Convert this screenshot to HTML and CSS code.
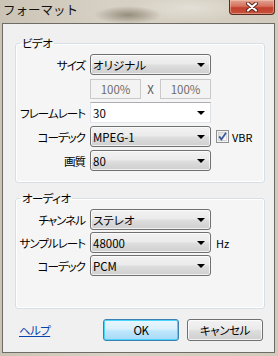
FILE: index.html
```html
<!DOCTYPE html>
<html lang="ja">
<head>
<meta charset="utf-8">
<link rel="stylesheet" href="styles.css">
</head>
<body>
<div class="window">
  <div class="titlebar">
    <span class="title">フォーマット</span>
    <div class="close">
      <svg width="14" height="10" viewBox="0 0 14 10"><path d="M3 1.5 L11 8.5 M11 1.5 L3 8.5" stroke="#5a2219" stroke-width="4" stroke-linecap="round"/><path d="M3 1.5 L11 8.5 M11 1.5 L3 8.5" stroke="#ffffff" stroke-width="2.2" stroke-linecap="round"/></svg>
    </div>
  </div>
  <div class="client">
    <fieldset class="group video">
      <legend>ビデオ</legend>
      <div class="form">
        <span class="lbl">サイズ</span>
        <div class="select"><span class="val">オリジナル</span><i class="arrow"></i></div>
        <span></span>

        <span class="lbl"></span>
        <div class="pair"><div class="field">100%</div><span class="x">X</span><div class="field">100%</div></div>
        <span></span>

        <span class="lbl">フレームレート</span>
        <div class="select edit"><span class="val">30</span><i class="arrow"></i></div>
        <span></span>

        <span class="lbl">コーデック</span>
        <div class="select"><span class="val">MPEG-1</span><i class="arrow"></i></div>
        <label class="check"><svg width="13" height="13" viewBox="0 0 13 13"><defs><linearGradient id="cb" x1="0" y1="0" x2="1" y2="1"><stop offset="0" stop-color="#dcdcdc"/><stop offset="1" stop-color="#ffffff"/></linearGradient></defs><rect x="0.5" y="0.5" width="12" height="12" fill="#f4f4f4" stroke="#8e8f8f"/><rect x="2.5" y="2.5" width="8" height="8" fill="url(#cb)" stroke="#c3c3c3" stroke-width="0.6"/><path d="M3.2 6.4 L5.4 9.4 L10 2.8" fill="none" stroke="#3d5ba0" stroke-width="1.8"/></svg><span>VBR</span></label>

        <span class="lbl">画質</span>
        <div class="select"><span class="val">80</span><i class="arrow"></i></div>
        <span></span>
      </div>
    </fieldset>

    <fieldset class="group audio">
      <legend>オーディオ</legend>
      <div class="form">
        <span class="lbl">チャンネル</span>
        <div class="select"><span class="val">ステレオ</span><i class="arrow"></i></div>
        <span></span>

        <span class="lbl">サンプルレート</span>
        <div class="select"><span class="val">48000</span><i class="arrow"></i></div>
        <span class="unit">Hz</span>

        <span class="lbl">コーデック</span>
        <div class="select"><span class="val">PCM</span><i class="arrow"></i></div>
        <span></span>
      </div>
    </fieldset>

    <div class="buttons">
      <a class="help" href="#">ヘルプ</a>
      <div class="btns">
        <button class="btn default">OK</button>
        <button class="btn">キャンセル</button>
      </div>
    </div>
  </div>
</div>
</body>
</html>
```
FILE: styles.css
```css
html, body {
  margin: 0;
  padding: 0;
}
body {
  width: 278px;
  height: 356px;
  overflow: hidden;
  font-family: "Noto Sans CJK JP", "Noto Sans", sans-serif;
  font-size: 12px;
  color: #000;
}
.window {
  width: 278px;
  height: 356px;
  box-sizing: border-box;
  padding: 0 3px 3px 2px;
  display: flex;
  flex-direction: column;
  background:
    radial-gradient(ellipse 34px 9px at 128px 15px, rgba(95, 85, 65, 0.55), rgba(95, 85, 65, 0) 100%),
    radial-gradient(ellipse 60px 14px at 190px 8px, rgba(255, 255, 250, 0.35), rgba(255, 255, 250, 0) 100%),
    linear-gradient(90deg, #cbc4b6 0%, #d7d1c5 40%, #d2cbbd 100%);
}
.titlebar {
  height: 23px;
  display: flex;
  align-items: flex-start;
  flex-shrink: 0;
}
.title {
  padding-left: 1px;
  padding-top: 2px;
  font-size: 12.5px;
  line-height: 16px;
  color: #111;
}
.close {
  margin-left: auto;
  width: 46px;
  height: 15px;
  box-sizing: border-box;
  border: 1px solid #5b2a22;
  border-top: none;
  border-radius: 0 0 4px 4px;
  background: linear-gradient(#e3a393 0%, #d4705c 45%, #c3402d 55%, #c7523a 100%);
  box-shadow: inset 0 0 0 1px rgba(255, 210, 190, 0.45);
  display: flex;
  align-items: center;
  justify-content: center;
}
.close svg {
  display: block;
}
.client {
  flex: 1;
  border: 1px solid #6f6c66;
  background: #f0f0f0;
  display: flex;
  flex-direction: column;
  padding: 13px 9px 0 12px;
}
.group {
  margin: 0;
  border: 1px solid #d5dfe5;
  border-radius: 3px;
  box-shadow: inset 0 0 0 1px #ffffff;
  background: #f5f5f5;
  padding: 5px 0 11px 0;
  min-width: 0;
}
.group legend {
  padding: 0 2px;
  margin-left: 4px;
  line-height: 12px;
  font-size: 11.5px;
  letter-spacing: -0.6px;
  font-feature-settings: "palt";
}
.audio {
  margin-top: 9px;
  padding-bottom: 32px;
}
.form {
  display: grid;
  grid-template-columns: 70px 121px auto;
  grid-auto-rows: 21px;
  column-gap: 4px;
  row-gap: 3px;
  align-items: center;
}
.audio .form {
  row-gap: 2px;
}
.lbl {
  text-align: right;
  font-size: 11.5px;
  letter-spacing: -1px;
  font-feature-settings: "palt";
  line-height: 14px;
  white-space: nowrap;
  padding-right: 1px;
}
.select {
  height: 21px;
  box-sizing: border-box;
  border: 1px solid #707070;
  border-radius: 3px;
  background: linear-gradient(#f2f2f2 0%, #ebebeb 45%, #dddddd 55%, #cfcfcf 100%);
  box-shadow: inset 0 0 0 1px rgba(255, 255, 255, 0.7);
  display: flex;
  align-items: center;
  padding: 0 5px 0 2px;
}
.select.edit {
  background: #ffffff;
  border-radius: 0;
  border-color: #e2e3ea #dbdfe6 #e3e9ef #e2e3ea;
  border-top-color: #abadb3;
  box-shadow: none;
}
.val {
  flex: 1;
  font-size: 11.5px;
  font-feature-settings: "palt";
  line-height: 14px;
  white-space: nowrap;
}
.arrow {
  width: 0;
  height: 0;
  border-left: 4px solid transparent;
  border-right: 4px solid transparent;
  border-top: 4px solid #000;
}
.pair {
  display: flex;
  align-items: center;
  height: 20px;
}
.field {
  width: 51px;
  height: 20px;
  box-sizing: border-box;
  border: 1px solid #c9c9c9;
  background: #f3f3f3;
  color: #6d6d6d;
  text-align: center;
  line-height: 18px;
  font-size: 11.5px;
}
.x {
  width: 19px;
  text-align: center;
  color: #555;
  line-height: 14px;
  font-size: 11.5px;
}
.check {
  display: flex;
  align-items: center;
  gap: 3px;
  margin-left: 1px;
  font-size: 11px;
}
.check svg {
  display: block;
}
.unit {
  margin-left: 1px;
  font-size: 11px;
}
.buttons {
  margin-top: 10px;
  display: flex;
  align-items: center;
  padding: 0 2px 0 4px;
}
.help {
  color: #0645ad;
  text-decoration: underline;
  font-feature-settings: "palt";
  font-size: 11.5px;
  letter-spacing: -0.6px;
  line-height: 14px;
}
.btns {
  margin-left: auto;
  display: flex;
  gap: 8px;
}
.btn {
  width: 76px;
  height: 22px;
  margin: 0;
  padding: 0;
  font-family: "Noto Sans CJK JP", "Noto Sans", sans-serif;
  font-size: 11.5px;
  line-height: 14px;
  letter-spacing: -0.4px;
  font-feature-settings: "palt";
  color: #000;
  border: 1px solid #707070;
  border-radius: 3px;
  background: linear-gradient(#f2f2f2 0%, #ebebeb 45%, #dddddd 55%, #cfcfcf 100%);
  box-shadow: inset 0 0 0 1px rgba(255, 255, 255, 0.75);
}
.btn.default {
  border-color: #3c7fb1;
  background: linear-gradient(#eaf6fd 0%, #d9f0fc 45%, #bee6fd 55%, #a7d9f5 100%);
  box-shadow: inset 0 0 0 1px #48d4fb;
}
```
